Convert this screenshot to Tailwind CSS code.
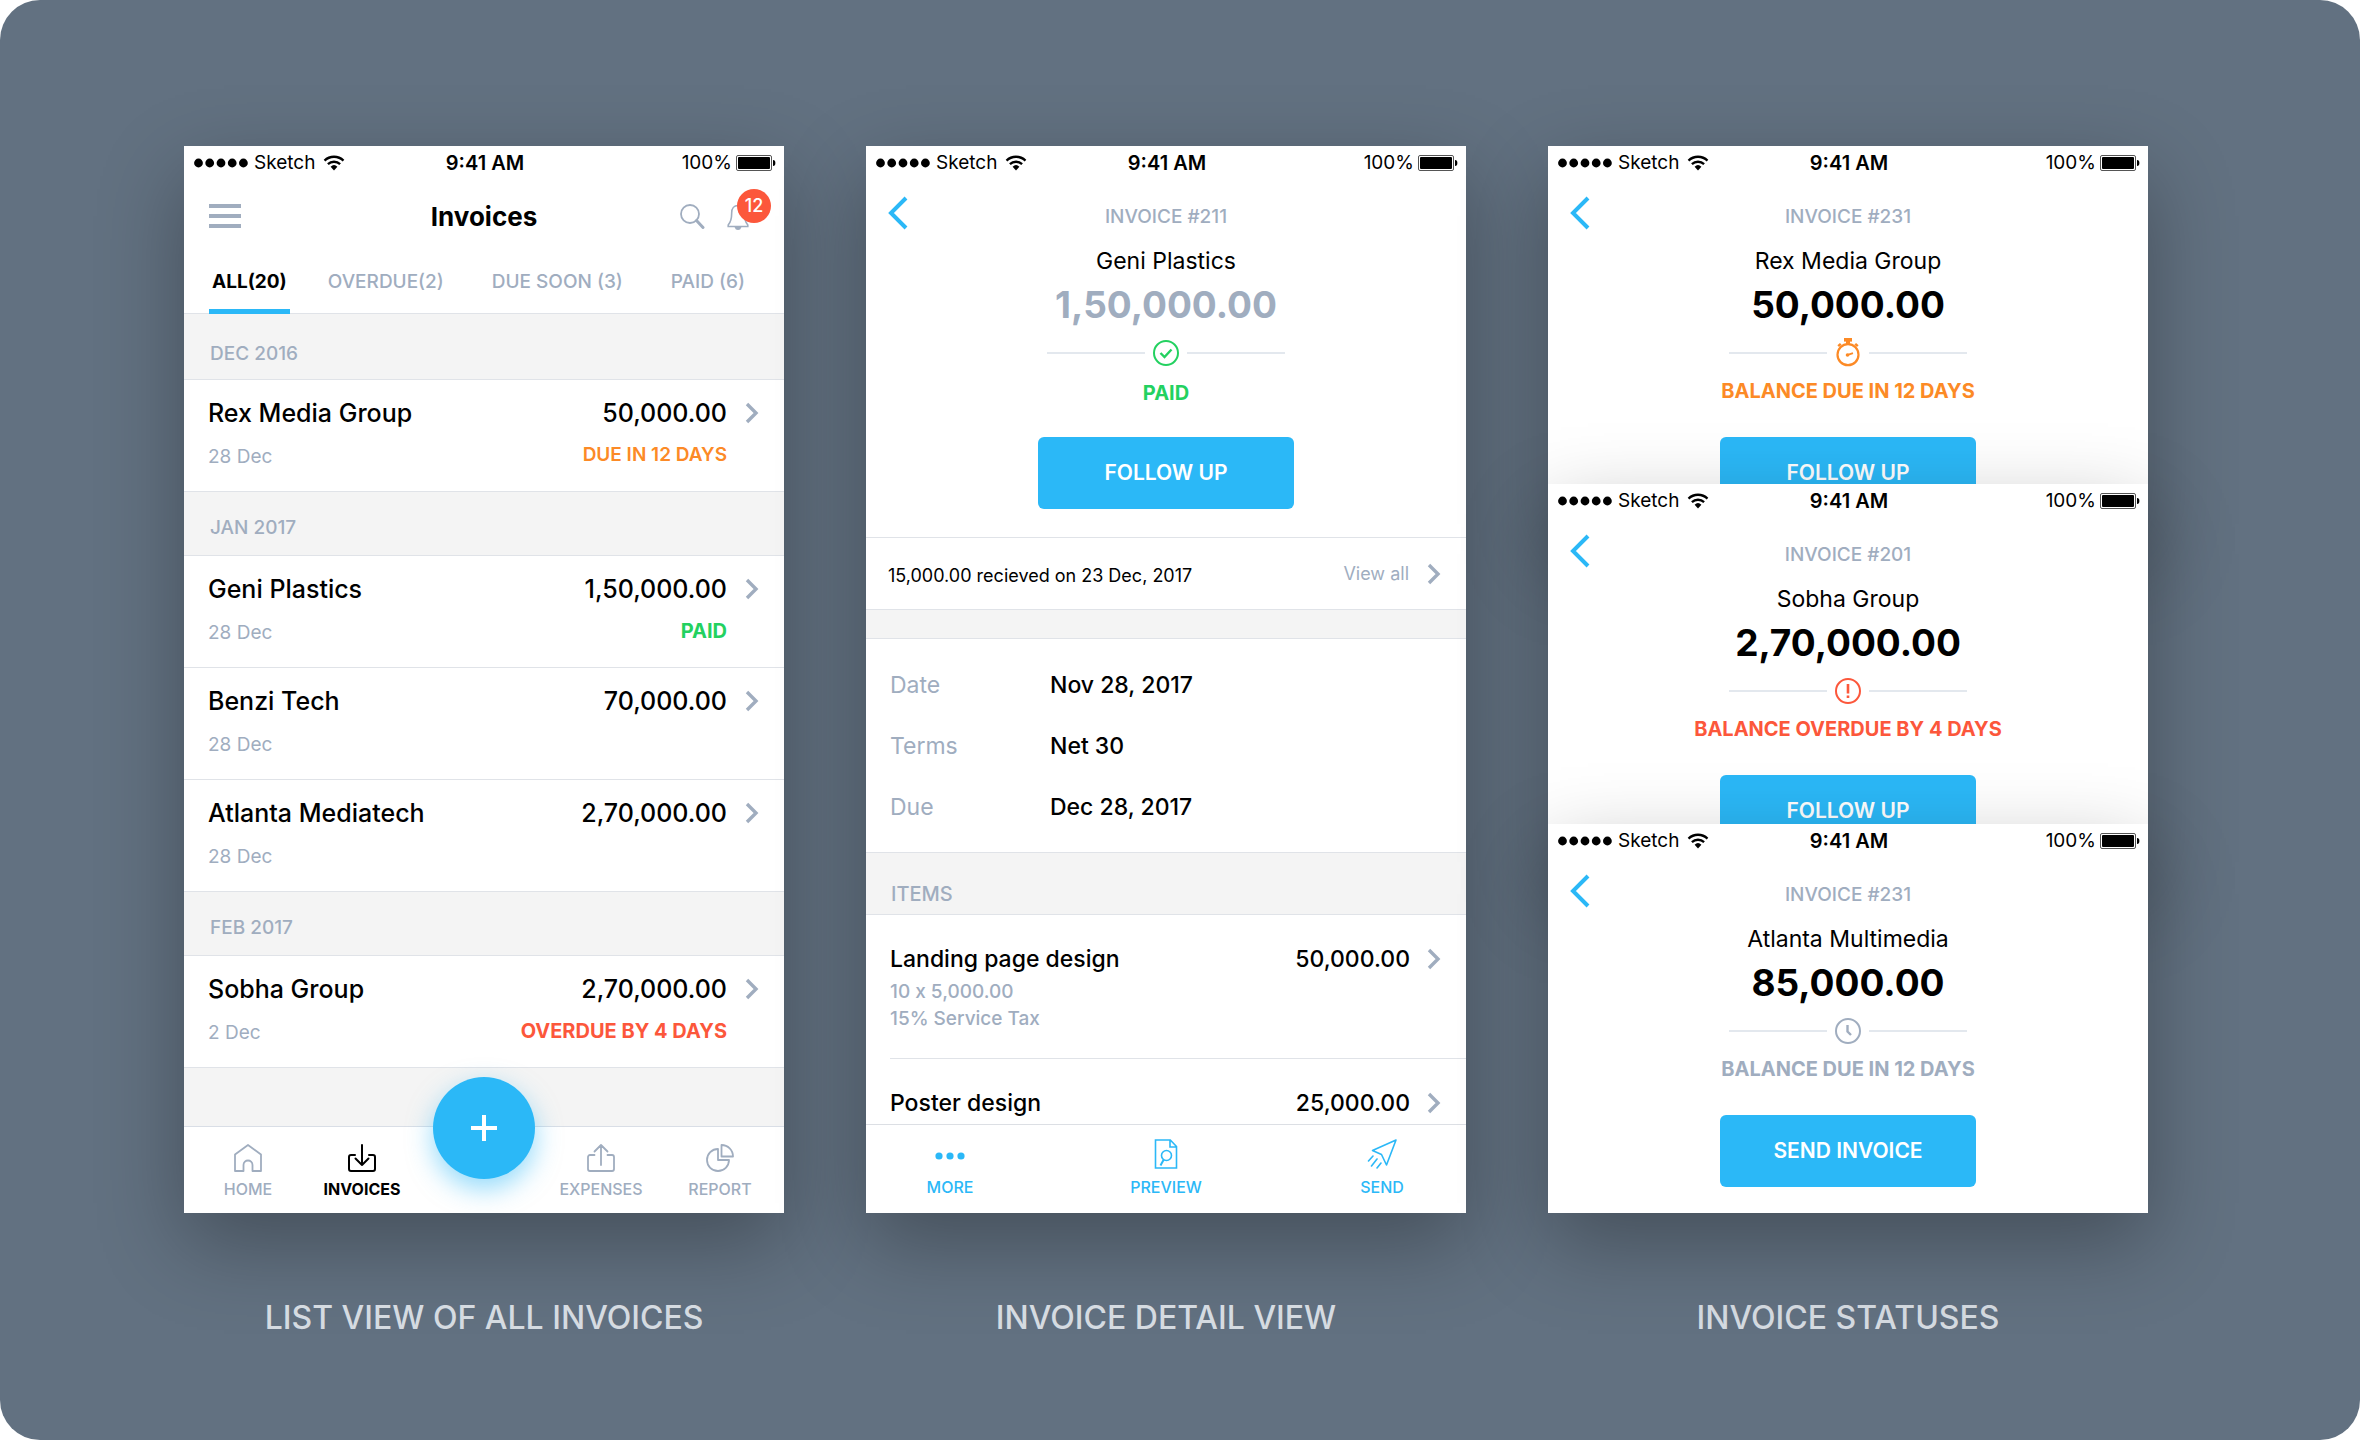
<!DOCTYPE html>
<html lang="en">
<head>
    <meta charset="UTF-8">
    <meta name="viewport" content="width=device-width, initial-scale=1.0">
    <title>Invoices</title>
    <script src="https://cdn.jsdelivr.net/npm/@tailwindcss/browser@4"></script>
</head>
<body class="bg-white font-['Inter',sans-serif] text-black antialiased">
    <!-- Icon sprite -->
    <svg class="hidden">
        <symbol id="wifi" viewBox="0 0 22 16">
            <path d="M1.5 5.6a13.6 13.6 0 0 1 19 0M4.9 9.2a8.8 8.8 0 0 1 12.2 0" fill="none" stroke="#000" stroke-width="2.3"/>
            <path d="M7.6 11.7a5 5 0 0 1 6.8 0L11 15.4z" fill="#000"/>
        </symbol>
        <symbol id="dots" viewBox="0 0 54 10">
            <circle cx="4.5" cy="5" r="4.4"/><circle cx="15.7" cy="5" r="4.4"/><circle cx="27" cy="5" r="4.4"/><circle cx="38.2" cy="5" r="4.4"/><circle cx="49.4" cy="5" r="4.4"/>
        </symbol>
        <symbol id="battery" viewBox="0 0 40 16">
            <rect x=".5" y=".5" width="35" height="15" rx="1.5" fill="#fff" stroke="#555"/>
            <rect x="2" y="2" width="32" height="12" rx="1"/>
            <path d="M37 5c1.6 0 2.4 1.2 2.4 3s-.8 3-2.4 3z"/>
        </symbol>
        <symbol id="next" viewBox="0 0 14 22">
            <path d="M2 2l9 9-9 9" fill="none" stroke="#a0adbf" stroke-width="3.4"/>
        </symbol>
        <symbol id="back" viewBox="0 0 20 34">
            <path d="M18 2L3 17l15 15" fill="none" stroke="#2bb8f7" stroke-width="4"/>
        </symbol>
    </svg>

    <main class="min-h-screen rounded-[40px] bg-[#627181] pt-[146px] pr-[212px] pl-[184px]">
        <div class="grid grid-cols-3 items-start gap-x-[82px]">

            <!-- List view -->
            <figure>
                <div class="bg-white shadow-[0_30px_80px_rgba(0,0,0,0.3)]">
                    <div class="grid h-[34px] grid-cols-3 items-center pr-2 pl-2.5 text-[19px]">
                        <span class="flex items-center gap-1.5"><svg class="h-2.5 w-[54px]"><use href="#dots"/></svg>Sketch<svg class="ml-0.5 h-4 w-[22px]"><use href="#wifi"/></svg></span>
                        <span class="text-center text-[20px] font-semibold">9:41 AM</span>
                        <span class="flex items-center justify-end gap-1">100%<svg class="h-4 w-10"><use href="#battery"/></svg></span>
                    </div>

                    <header class="grid h-[72px] grid-cols-3 items-center px-[25px]">
                        <button aria-label="Menu" class="flex w-8 flex-col gap-1.5">
                            <span class="h-1 bg-[#a0adbf]"></span>
                            <span class="h-1 bg-[#a0adbf]"></span>
                            <span class="h-1 bg-[#a0adbf]"></span>
                        </button>
                        <h1 class="text-center text-[26px] font-bold">Invoices</h1>
                        <div class="flex items-center justify-end gap-[21px]">
                            <button aria-label="Search">
                                <svg class="size-[26px]" viewBox="0 0 26 26" fill="none" stroke="#a0adbf"><circle cx="10" cy="11" r="9" stroke-width="1.8"/><path d="M16.5 17.5l6.500 7" stroke-width="3" stroke-linecap="round"/></svg>
                            </button>
                            <button aria-label="Notifications" class="relative mr-2.5">
                                <svg class="h-[27px] w-[22px]" viewBox="0 0 22 27" fill="none" stroke="#a0adbf" stroke-width="1.6"><path d="M11 2.500c-4 0-6.300 3-6.300 7.200 0 6.500-1 9.500-3.500 12.300v1.500h19.600V22c-2.500-2.800-3.500-5.800-3.500-12.300 0-4.200-2.300-7.200-6.300-7.200z"/><path d="M8.500 24.200c.4 1.500 1.200 2 2.500 2s2.100-.5 2.500-2z" fill="#a0adbf"/></svg>
                                <span class="absolute -top-3.5 left-2.5 flex size-[34px] items-center justify-center rounded-full bg-[#fc573b] text-[18px] font-medium text-white">12</span>
                            </button>
                        </div>
                    </header>

                    <nav class="flex h-[62px] justify-between border-b border-[#e0e3e8] pr-[39px] pl-[25px] text-[19px] text-[#a0adbf]">
                        <a href="#" class="-mr-2.5 -mb-px border-b-[5px] border-[#2bb8f7] px-[3px] pt-4 font-bold text-black">ALL(20)</a>
                        <a href="#" class="pt-4 font-medium">OVERDUE(2)</a>
                        <a href="#" class="pt-4 font-medium">DUE SOON (3)</a>
                        <a href="#" class="pt-4 font-medium">PAID (6)</a>
                    </nav>

                    <h2 class="h-[66px] border-b border-[#e0e3e8] bg-[#f4f4f4] px-[26px] pt-[26px] text-[19px] font-medium text-[#a0adbf]">DEC 2016</h2>
                    <a href="#" class="grid h-28 grid-cols-[1fr_auto_14px] content-start items-center gap-x-[18px] gap-y-2.5 border-b border-[#e0e3e8] pt-[15px] pr-[25px] pl-6">
                        <span class="text-[25px] leading-9 font-medium">Rex Media Group</span>
                        <span class="text-right text-[25px] leading-9 font-medium">50,000.00</span>
                        <svg class="h-[22px] w-3.5"><use href="#next"/></svg>
                        <span class="pt-1 text-[19px] leading-6 text-[#a0adbf]">28 Dec</span>
                        <span class="text-right text-[19px] leading-6 font-semibold text-[#fc8a26]">DUE IN 12 DAYS</span>
                    </a>

                    <h2 class="h-16 border-b border-[#e0e3e8] bg-[#f4f4f4] px-[26px] pt-[22px] text-[19px] font-medium text-[#a0adbf]">JAN 2017</h2>
                    <a href="#" class="grid h-28 grid-cols-[1fr_auto_14px] content-start items-center gap-x-[18px] gap-y-2.5 border-b border-[#e0e3e8] pt-[15px] pr-[25px] pl-6">
                        <span class="text-[25px] leading-9 font-medium">Geni Plastics</span>
                        <span class="text-right text-[25px] leading-9 font-medium">1,50,000.00</span>
                        <svg class="h-[22px] w-3.5"><use href="#next"/></svg>
                        <span class="pt-1 text-[19px] leading-6 text-[#a0adbf]">28 Dec</span>
                        <span class="text-right text-[20px] leading-6 font-bold text-[#23d160]">PAID</span>
                    </a>
                    <a href="#" class="grid h-28 grid-cols-[1fr_auto_14px] content-start items-center gap-x-[18px] gap-y-2.5 border-b border-[#e0e3e8] pt-[15px] pr-[25px] pl-6">
                        <span class="text-[25px] leading-9 font-medium">Benzi Tech</span>
                        <span class="text-right text-[25px] leading-9 font-medium">70,000.00</span>
                        <svg class="h-[22px] w-3.5"><use href="#next"/></svg>
                        <span class="pt-1 text-[19px] leading-6 text-[#a0adbf]">28 Dec</span>
                    </a>
                    <a href="#" class="grid h-28 grid-cols-[1fr_auto_14px] content-start items-center gap-x-[18px] gap-y-2.5 border-b border-[#e0e3e8] pt-[15px] pr-[25px] pl-6">
                        <span class="text-[25px] leading-9 font-medium">Atlanta Mediatech</span>
                        <span class="text-right text-[25px] leading-9 font-medium">2,70,000.00</span>
                        <svg class="h-[22px] w-3.5"><use href="#next"/></svg>
                        <span class="pt-1 text-[19px] leading-6 text-[#a0adbf]">28 Dec</span>
                    </a>

                    <h2 class="h-16 border-b border-[#e0e3e8] bg-[#f4f4f4] px-[26px] pt-[22px] text-[19px] font-medium text-[#a0adbf]">FEB 2017</h2>
                    <a href="#" class="grid h-28 grid-cols-[1fr_auto_14px] content-start items-center gap-x-[18px] gap-y-2.5 border-b border-[#e0e3e8] pt-[15px] pr-[25px] pl-6">
                        <span class="text-[25px] leading-9 font-medium">Sobha Group</span>
                        <span class="text-right text-[25px] leading-9 font-medium">2,70,000.00</span>
                        <svg class="h-[22px] w-3.5"><use href="#next"/></svg>
                        <span class="pt-1 text-[19px] leading-6 text-[#a0adbf]">2 Dec</span>
                        <span class="text-right text-[20px] leading-6 font-bold text-[#fc573b]">OVERDUE BY 4 DAYS</span>
                    </a>
                    <div class="h-[58px] bg-[#f4f4f4]"></div>

                    <!-- Bottom tabs -->
                    <nav class="relative flex h-[87px] justify-between border-t border-[#d9dee6] px-8 pt-4 text-[16px] font-medium text-[#a0adbf]">
                        <div class="flex gap-[42px]">
                            <a href="#" class="flex w-16 flex-col items-center gap-1">
                                <svg class="size-[30px]" viewBox="0 0 30 30" fill="none" stroke="currentColor" stroke-width="1.8" stroke-linejoin="round"><path d="M2 11.500L15 2l13 9.500V28h-8.500v-6c0-6-9-6-9 0v6H2z"/></svg>
                                <span>HOME</span>
                            </a>
                            <a href="#" class="flex w-20 flex-col items-center gap-1 font-bold text-black">
                                <svg class="size-[30px]" viewBox="0 0 30 30" fill="none" stroke="currentColor" stroke-width="2" stroke-linecap="round" stroke-linejoin="round"><path d="M8 12H4a2 2 0 0 0-2 2v12a2 2 0 0 0 2 2h22a2 2 0 0 0 2-2V14a2 2 0 0 0-2-2h-4M15 2v20M8.500 15.500L15 22l6.500-6.500"/></svg>
                                <span>INVOICES</span>
                            </a>
                        </div>
                        <div class="flex gap-[47px]">
                            <a href="#" class="flex w-20 flex-col items-center gap-1">
                                <svg class="size-[30px]" viewBox="0 0 30 30" fill="none" stroke="currentColor" stroke-width="1.8" stroke-linecap="round" stroke-linejoin="round"><path d="M8.500 12H4a2 2 0 0 0-2 2v12a2 2 0 0 0 2 2h22a2 2 0 0 0 2-2V14a2 2 0 0 0-2-2h-4.500M15 22V2M8.500 8.500L15 2l6.500 6.500"/></svg>
                                <span>EXPENSES</span>
                            </a>
                            <a href="#" class="flex w-16 flex-col items-center gap-1">
                                <svg class="size-[30px]" viewBox="0 0 30 30" fill="none" stroke="currentColor" stroke-width="1.8" stroke-linejoin="round"><path d="M13 6v11h11a11 11 0 1 1-11-11zM16.500 2v11.500H28C28 7 23 2 16.500 2z"/></svg>
                                <span>REPORT</span>
                            </a>
                        </div>
                        <button aria-label="Add invoice" class="absolute -top-[50px] left-1/2 flex size-[102px] -translate-x-1/2 items-center justify-center rounded-full bg-[#2bb8f7] shadow-[0_10px_26px_rgba(43,184,247,0.5)]">
                            <svg class="size-[26px]" viewBox="0 0 26 26" stroke="#fff" stroke-width="4"><path d="M13 0v26M0 13h26"/></svg>
                        </button>
                    </nav>
                </div>
                <figcaption class="pt-[85px] text-center text-[32px] leading-10 font-medium text-[#d5dbe1]">LIST VIEW OF ALL INVOICES</figcaption>
            </figure>

            <!-- Detail view -->
            <figure>
                <div class="bg-white shadow-[0_30px_80px_rgba(0,0,0,0.3)]">
                    <div class="grid h-[34px] grid-cols-3 items-center pr-2 pl-2.5 text-[19px]">
                        <span class="flex items-center gap-1.5"><svg class="h-2.5 w-[54px]"><use href="#dots"/></svg>Sketch<svg class="ml-0.5 h-4 w-[22px]"><use href="#wifi"/></svg></span>
                        <span class="text-center text-[20px] font-semibold">9:41 AM</span>
                        <span class="flex items-center justify-end gap-1">100%<svg class="h-4 w-10"><use href="#battery"/></svg></span>
                    </div>
                    <header class="grid grid-cols-[20px_1fr_20px] items-start px-[22px] pt-4">
                        <button aria-label="Back"><svg class="h-[34px] w-5"><use href="#back"/></svg></button>
                        <p class="pt-[9px] text-center text-[19px] leading-6 font-medium text-[#a0adbf]">INVOICE #211</p>
                    </header>
                    <div class="flex flex-col items-center">
                        <p class="mt-[15px] text-[23px] leading-8">Geni Plastics</p>
                        <p class="mt-1 text-[37px] leading-12 font-bold text-[#a0adbf]">1,50,000.00</p>
                        <div class="mt-[11px] flex h-[26px] items-center gap-2">
                            <span class="h-0.5 w-[98px] bg-[#e3e8ee]"></span>
                            <svg class="size-[26px]" viewBox="0 0 26 26" fill="none" stroke="#23d160"><circle cx="13" cy="13" r="12" stroke-width="2"/><path d="M7.500 13l4 4 7-7.500" stroke-width="2.400"/></svg>
                            <span class="h-0.5 w-[98px] bg-[#e3e8ee]"></span>
                        </div>
                        <p class="mt-[13px] text-[20px] leading-7 font-bold text-[#23d160]">PAID</p>
                        <button class="mt-[30px] h-[72px] w-64 rounded-[6px] bg-[#2bb8f7] text-[21px] font-semibold text-white">FOLLOW UP</button>
                    </div>

                    <div class="mt-7 flex h-[73px] items-center border-y border-[#e0e3e8] pr-[25px] pl-[22px]">
                        <p class="flex-1 pt-1 text-[18px]">15,000.00 recieved on 23 Dec, 2017</p>
                        <a href="#" class="flex items-center gap-[18px] text-[18px] text-[#a0adbf]">View all <svg class="h-[22px] w-3.5"><use href="#next"/></svg></a>
                    </div>
                    <div class="h-7 bg-[#f4f4f4]"></div>
                    <dl class="grid h-[215px] grid-cols-[160px_1fr] content-start gap-y-[29px] border-y border-[#e0e3e8] pt-[30px] pl-6 text-[23px] leading-8">
                        <dt class="text-[#a0adbf]">Date</dt>
                        <dd class="font-medium">Nov 28, 2017</dd>
                        <dt class="text-[#a0adbf]">Terms</dt>
                        <dd class="font-medium">Net 30</dd>
                        <dt class="text-[#a0adbf]">Due</dt>
                        <dd class="font-medium">Dec 28, 2017</dd>
                    </dl>
                    <h2 class="h-[62px] border-b border-[#e0e3e8] bg-[#f4f4f4] px-[25px] pt-[26px] text-[20px] font-medium text-[#a0adbf]">ITEMS</h2>
                    <a href="#" class="ml-6 grid h-36 grid-cols-[1fr_auto_14px] content-start items-center gap-x-[17px] border-b border-[#e0e3e8] pt-7 pr-[25px]">
                        <span class="text-[23px] leading-8 font-medium">Landing page design</span>
                        <span class="text-[23px] leading-8 font-medium">50,000.00</span>
                        <svg class="h-[22px] w-3.5"><use href="#next"/></svg>
                        <span class="col-span-3 pt-[3px] text-[19px] leading-[27px] font-medium text-[#a0adbf] [font-feature-settings:'calt'_0]">10 x 5,000.00<br>15% Service Tax</span>
                    </a>
                    <a href="#" class="ml-6 grid h-[65px] grid-cols-[1fr_auto_14px] content-start items-center gap-x-[17px] pt-7 pr-[25px]">
                        <span class="text-[23px] leading-8 font-medium">Poster design</span>
                        <span class="text-[23px] leading-8 font-medium">25,000.00</span>
                        <svg class="h-[22px] w-3.5"><use href="#next"/></svg>
                    </a>
                    <nav class="flex h-[89px] justify-between border-t border-[#dcdfe4] px-[39px] pt-3 text-[16px] font-medium text-[#2bb8f7]">
                        <a href="#" class="flex w-[90px] flex-col items-center gap-1.5">
                            <svg class="size-8" viewBox="0 0 32 32" fill="currentColor"><circle cx="5" cy="19" r="3.600"/><circle cx="16" cy="19" r="3.600"/><circle cx="27" cy="19" r="3.600"/></svg>
                            <span>MORE</span>
                        </a>
                        <a href="#" class="flex w-[90px] flex-col items-center gap-1.5">
                            <svg class="size-8" viewBox="0 0 32 32" fill="none" stroke="currentColor" stroke-width="1.600"><path d="M5.500 3h14.800l6.200 6.500V31h-21zM20 3v7h6.500"/><circle cx="16.500" cy="18.500" r="5"/><path d="M13.800 22.500L10.500 28.500" stroke-width="2"/></svg>
                            <span>PREVIEW</span>
                        </a>
                        <a href="#" class="flex w-[90px] flex-col items-center gap-1.5">
                            <svg class="size-8" viewBox="0 0 32 32" fill="none" stroke="currentColor" stroke-width="1.600" stroke-linejoin="round"><path d="M30 3L6.500 13.500l9 4L20.500 28z"/><path d="M7 19L2.500 24M11 22l-5.500 7M15 26l-4 5" stroke-linecap="round"/></svg>
                            <span>SEND</span>
                        </a>
                    </nav>
                </div>
                <figcaption class="pt-[85px] text-center text-[32px] leading-10 font-medium text-[#d5dbe1]">INVOICE DETAIL VIEW</figcaption>
            </figure>

            <!-- Statuses, stacked over each other -->
            <figure>
                <section class="h-[388px] bg-white shadow-[0_30px_80px_rgba(0,0,0,0.3)]">
                    <div class="grid h-[34px] grid-cols-3 items-center pr-2 pl-2.5 text-[19px]">
                        <span class="flex items-center gap-1.5"><svg class="h-2.5 w-[54px]"><use href="#dots"/></svg>Sketch<svg class="ml-0.5 h-4 w-[22px]"><use href="#wifi"/></svg></span>
                        <span class="text-center text-[20px] font-semibold">9:41 AM</span>
                        <span class="flex items-center justify-end gap-1">100%<svg class="h-4 w-10"><use href="#battery"/></svg></span>
                    </div>
                    <header class="grid grid-cols-[20px_1fr_20px] items-start px-[22px] pt-4">
                        <button aria-label="Back"><svg class="h-[34px] w-5"><use href="#back"/></svg></button>
                        <p class="pt-[9px] text-center text-[19px] leading-6 font-medium text-[#a0adbf]">INVOICE #231</p>
                    </header>
                    <div class="flex flex-col items-center">
                        <p class="mt-[15px] text-[23px] leading-8">Rex Media Group</p>
                        <p class="mt-1 text-[37px] leading-12 font-bold">50,000.00</p>
                        <div class="mt-[11px] flex h-[26px] items-center gap-2">
                            <span class="h-0.5 w-[98px] bg-[#e3e8ee]"></span>
                            <svg class="h-[30px] w-[26px]" viewBox="0 0 26 30" fill="none" stroke="#fc8a26"><circle cx="13" cy="16.700" r="10.500" stroke-width="2.200"/><path d="M9 1.800h8" stroke-width="3.600"/><path d="M13 3v4" stroke-width="4"/><path d="M3.200 8.200l2.600-2.400M22.800 8.200l-2.600-2.400" stroke-width="2.400"/><circle cx="12.500" cy="17" r="1.800" fill="#fc8a26" stroke="none"/><path d="M12 17.200l6-2" stroke-width="1.800"/></svg>
                            <span class="h-0.5 w-[98px] bg-[#e3e8ee]"></span>
                        </div>
                        <p class="mt-[11px] text-[20px] leading-7 font-bold text-[#fc8a26]">BALANCE DUE IN 12 DAYS</p>
                        <button class="mt-8 h-[72px] w-64 rounded-[6px] bg-[#2bb8f7] text-[21px] font-semibold text-white">FOLLOW UP</button>
                    </div>
                </section>
                <section class="relative -mt-[50px] h-[388px] bg-white shadow-[0_30px_80px_rgba(0,0,0,0.3)]">
                    <div class="grid h-[34px] grid-cols-3 items-center pr-2 pl-2.5 text-[19px]">
                        <span class="flex items-center gap-1.5"><svg class="h-2.5 w-[54px]"><use href="#dots"/></svg>Sketch<svg class="ml-0.5 h-4 w-[22px]"><use href="#wifi"/></svg></span>
                        <span class="text-center text-[20px] font-semibold">9:41 AM</span>
                        <span class="flex items-center justify-end gap-1">100%<svg class="h-4 w-10"><use href="#battery"/></svg></span>
                    </div>
                    <header class="grid grid-cols-[20px_1fr_20px] items-start px-[22px] pt-4">
                        <button aria-label="Back"><svg class="h-[34px] w-5"><use href="#back"/></svg></button>
                        <p class="pt-[9px] text-center text-[19px] leading-6 font-medium text-[#a0adbf]">INVOICE #201</p>
                    </header>
                    <div class="flex flex-col items-center">
                        <p class="mt-[15px] text-[23px] leading-8">Sobha Group</p>
                        <p class="mt-1 text-[37px] leading-12 font-bold">2,70,000.00</p>
                        <div class="mt-[11px] flex h-[26px] items-center gap-2">
                            <span class="h-0.5 w-[98px] bg-[#e3e8ee]"></span>
                            <svg class="size-[26px]" viewBox="0 0 26 26" fill="none" stroke="#fc573b"><circle cx="13" cy="13" r="12" stroke-width="2"/><path d="M13 6v9.500M13 17.500V20" stroke-width="2.600"/></svg>
                            <span class="h-0.5 w-[98px] bg-[#e3e8ee]"></span>
                        </div>
                        <p class="mt-[11px] text-[20px] leading-7 font-bold text-[#fc573b]">BALANCE OVERDUE BY 4 DAYS</p>
                        <button class="mt-8 h-[72px] w-64 rounded-[6px] bg-[#2bb8f7] text-[21px] font-semibold text-white">FOLLOW UP</button>
                    </div>
                </section>
                <section class="relative -mt-12 h-[389px] bg-white shadow-[0_30px_80px_rgba(0,0,0,0.3)]">
                    <div class="grid h-[34px] grid-cols-3 items-center pr-2 pl-2.5 text-[19px]">
                        <span class="flex items-center gap-1.5"><svg class="h-2.5 w-[54px]"><use href="#dots"/></svg>Sketch<svg class="ml-0.5 h-4 w-[22px]"><use href="#wifi"/></svg></span>
                        <span class="text-center text-[20px] font-semibold">9:41 AM</span>
                        <span class="flex items-center justify-end gap-1">100%<svg class="h-4 w-10"><use href="#battery"/></svg></span>
                    </div>
                    <header class="grid grid-cols-[20px_1fr_20px] items-start px-[22px] pt-4">
                        <button aria-label="Back"><svg class="h-[34px] w-5"><use href="#back"/></svg></button>
                        <p class="pt-[9px] text-center text-[19px] leading-6 font-medium text-[#a0adbf]">INVOICE #231</p>
                    </header>
                    <div class="flex flex-col items-center">
                        <p class="mt-[15px] text-[23px] leading-8">Atlanta Multimedia</p>
                        <p class="mt-1 text-[37px] leading-12 font-bold">85,000.00</p>
                        <div class="mt-[11px] flex h-[26px] items-center gap-2">
                            <span class="h-0.5 w-[98px] bg-[#e3e8ee]"></span>
                            <svg class="size-[26px]" viewBox="0 0 26 26" fill="none" stroke="#a0adbf"><circle cx="13" cy="13" r="12" stroke-width="2"/><path d="M12.500 7v6.500l3.500 3.500" stroke-width="2.400"/></svg>
                            <span class="h-0.5 w-[98px] bg-[#e3e8ee]"></span>
                        </div>
                        <p class="mt-[11px] text-[20px] leading-7 font-bold text-[#a0adbf]">BALANCE DUE IN 12 DAYS</p>
                        <button class="mt-8 h-[72px] w-64 rounded-[6px] bg-[#2bb8f7] text-[21px] font-semibold text-white">SEND INVOICE</button>
                    </div>
                </section>
                <figcaption class="pt-[85px] text-center text-[32px] leading-10 font-medium text-[#d5dbe1]">INVOICE STATUSES</figcaption>
            </figure>
        </div>
    </main>
</body>
</html>
